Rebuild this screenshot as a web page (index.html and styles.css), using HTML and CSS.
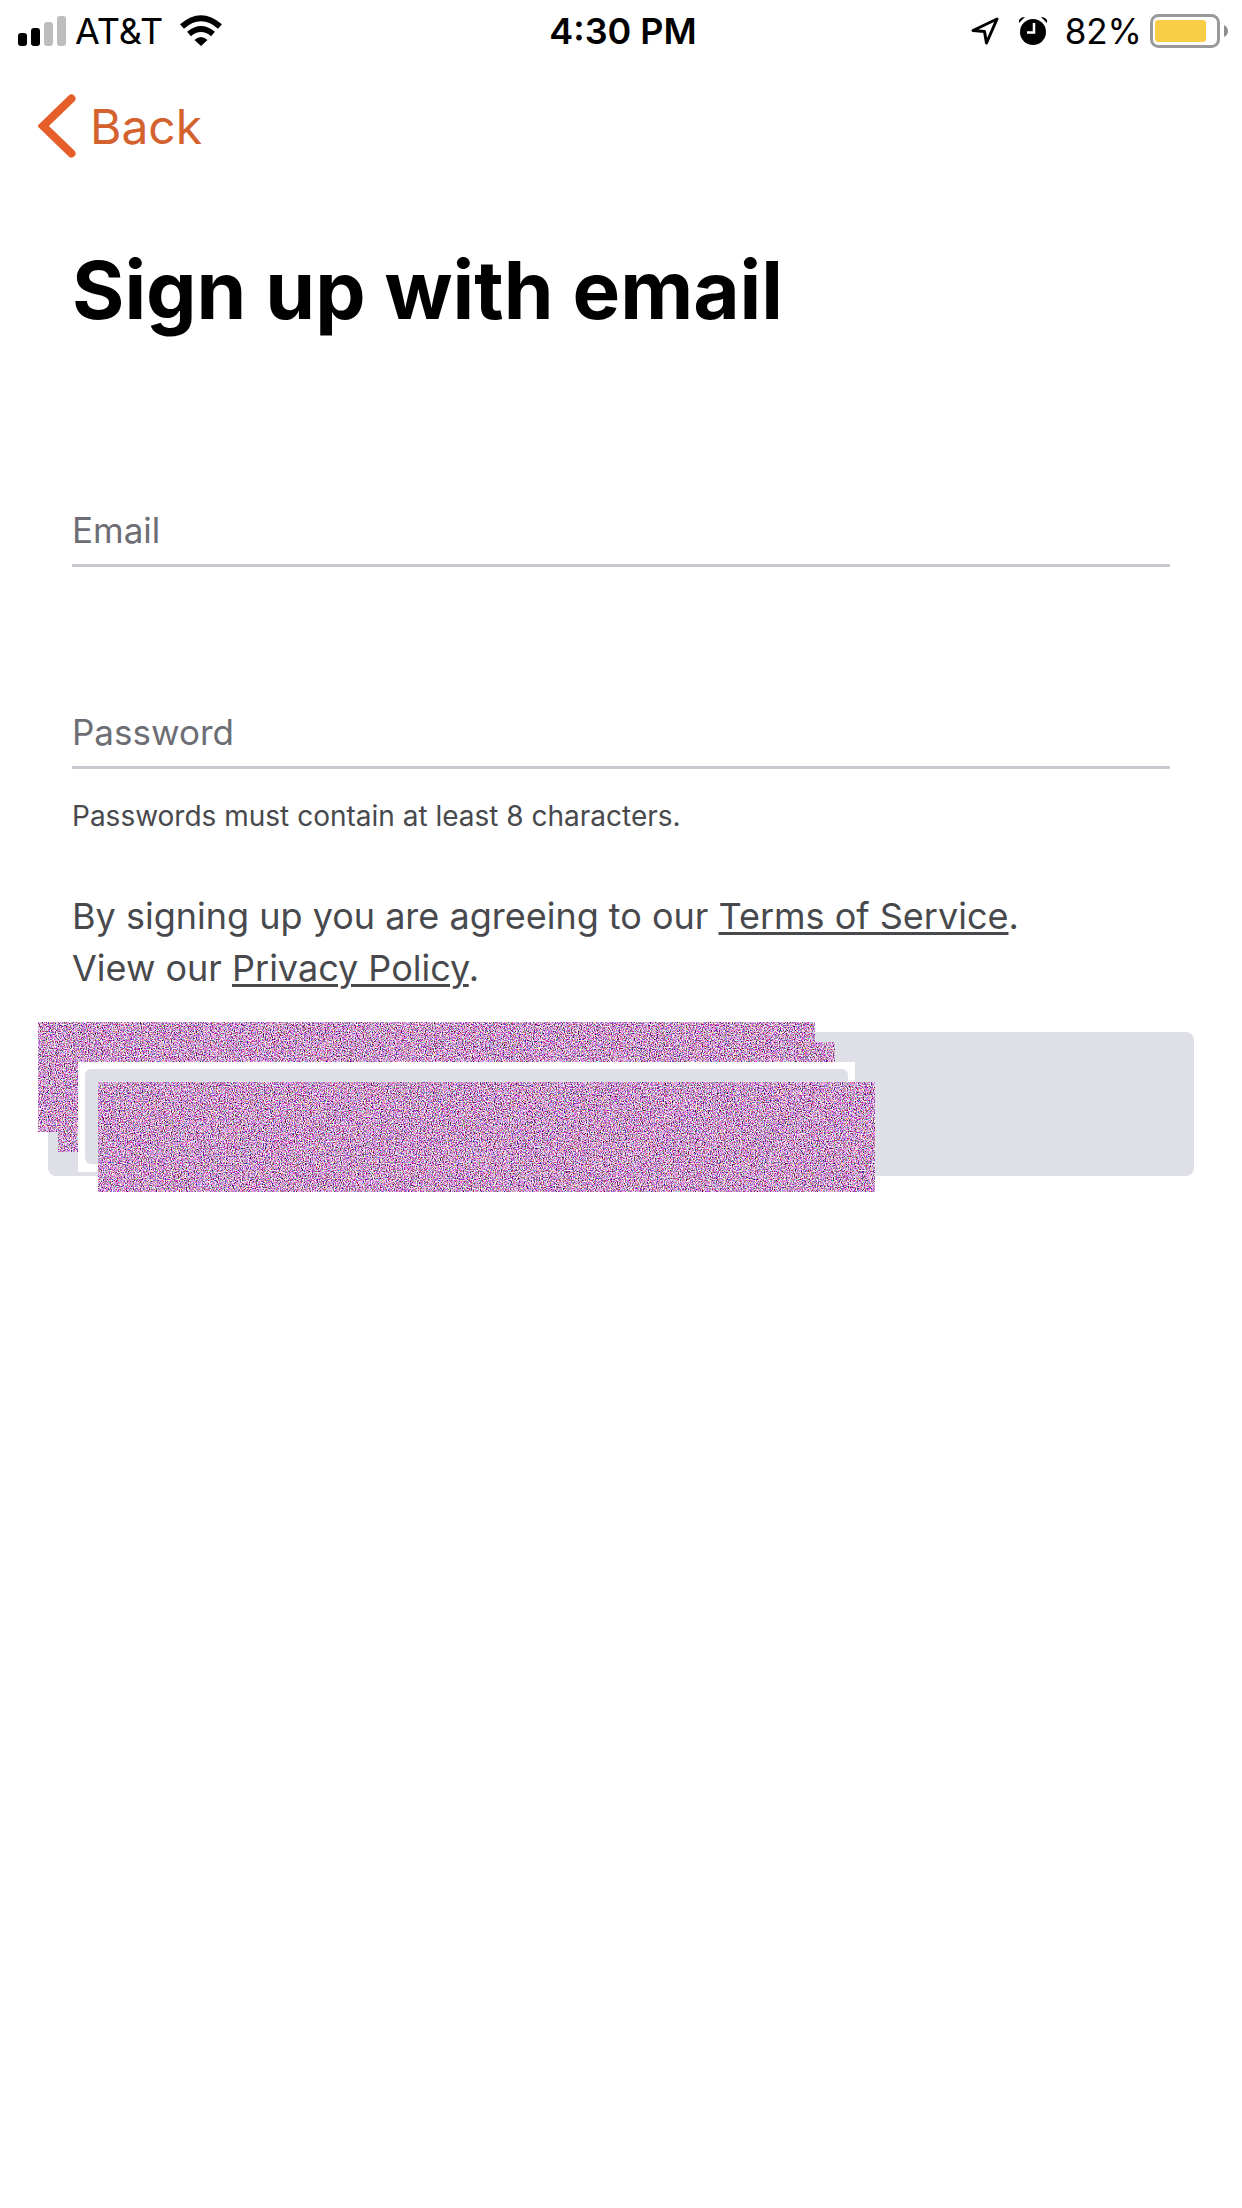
FILE: index.html
```html
<!DOCTYPE html>
<html lang="en">
<head>
<meta charset="utf-8">
<meta name="viewport" content="width=device-width, initial-scale=1">
<title>Sign up with email</title>
<link rel="stylesheet" href="styles.css">
</head>
<body>
<header class="status-bar">
  <div class="status-group">
    <svg class="icon-signal" viewBox="0 0 48 32" aria-hidden="true">
      <rect x="0" y="18" width="9" height="13" rx="3"/>
      <rect x="13" y="13" width="9" height="18" rx="3"/>
      <rect x="26" y="7" width="9" height="24" rx="3" fill="#bdbdbd"/>
      <rect x="39" y="1" width="9" height="30" rx="3" fill="#bdbdbd"/>
    </svg>
    <span class="carrier">AT&amp;T</span>
    <svg class="icon-wifi" viewBox="0 0 42 32" aria-hidden="true">
      <path d="M21 31 L14.500 25 Q21 19 27.500 25 Z"/>
      <g fill="none" stroke="#000" stroke-width="6">
        <path d="M2 11.500 Q21 -5 40 11.500"/>
        <path d="M9 19 Q21 9 33 19"/>
      </g>
    </svg>
  </div>
  <span class="clock">4:30 PM</span>
  <div class="status-group status-right">
    <svg class="icon-location" viewBox="0 0 28 28" aria-hidden="true">
      <path d="M2 13.500 L26 2 L15.500 26 L13.500 14.500 Z" fill="none" stroke="#000" stroke-width="3" stroke-linejoin="round"/>
    </svg>
    <svg class="icon-alarm" viewBox="0 0 28 28" aria-hidden="true">
      <circle cx="14" cy="15" r="13"/>
      <path d="M0 6 V3 Q2 0 6 0 Z M28 6 V3 Q26 0 22 0 Z"/>
      <path d="M15 6 V15.500 H8" fill="none" stroke="#fff" stroke-width="2.500"/>
    </svg>
    <span class="percent">82%</span>
    <svg class="icon-battery" viewBox="0 0 78 34" aria-hidden="true">
      <rect x="1.500" y="1.500" width="67" height="31" rx="7" fill="#fff" stroke="#999" stroke-width="3"/>
      <rect x="5" y="6" width="51" height="22" rx="3" fill="#f7ce46"/>
      <path d="M74 11 Q78 13 78 17 Q78 21 74 23 Z" fill="#8e8e8e"/>
    </svg>
  </div>
</header>

<nav class="nav-bar">
  <button type="button" class="back">
    <svg class="icon-back" viewBox="0 0 38 64" aria-hidden="true">
      <path d="M33.500 4.500 L5 32 L33.500 59.500" fill="none" stroke="#e65f2b" stroke-width="8" stroke-linecap="round" stroke-linejoin="miter"/>
    </svg>
    <span>Back</span>
  </button>
</nav>

<main>
  <form class="signup">
    <h1>Sign up with email</h1>
    <input class="field" type="email" placeholder="Email" aria-label="Email">
    <input class="field" type="password" placeholder="Password" aria-label="Password">
    <p class="hint">Passwords must contain at least 8 characters.</p>
    <p class="terms">By signing up you are agreeing to our <a href="#terms">Terms of Service</a>.<br>View our <a href="#privacy">Privacy Policy</a>.</p>
    <div class="submit-area">
      <button type="button" class="submit" aria-label="Sign up"></button>
      <svg class="cover" viewBox="0 0 837 170" aria-hidden="true">
        <filter id="grain" x="0" y="0" width="1" height="1" color-interpolation-filters="sRGB">
          <feTurbulence type="fractalNoise" baseFrequency="0.870" numOctaves="3" seed="7"/>
          <feColorMatrix values="1.500 0 0 1.500 -0.680  0 1.500 0 1.800 -1.050  0 0 1.500 1.500 -0.680  0 0 0 0 1"/>
        </filter>
        <rect width="777" height="110" filter="url(#grain)"/>
        <rect x="20" y="20" width="777" height="110" filter="url(#grain)"/>
        <rect x="40" y="40" width="777" height="110" fill="#fff"/>
        <rect x="47" y="47" width="763" height="95" rx="6" fill="#dedfe7"/>
        <rect x="60" y="60" width="777" height="110" filter="url(#grain)"/>
      </svg>
    </div>
  </form>
</main>
</body>
</html>
```
FILE: styles.css
```css
* {
  box-sizing: border-box;
}

body {
  margin: 0;
  min-height: 100vh;
  background: #fff;
  color: #000;
  font-family: Inter, "Liberation Sans", sans-serif;
}

svg {
  display: block;
}

.status-bar {
  display: grid;
  grid-template-columns: 1fr auto 1fr;
  align-items: center;
  height: 60px;
  padding: 2px 14px 0 18px;
  font-size: 36px;
}

.status-group {
  display: flex;
  align-items: center;
}

.status-right {
  justify-content: flex-end;
}

.icon-signal {
  width: 48px;
  height: 32px;
  margin-right: 9px;
}

.icon-wifi {
  width: 42px;
  height: 32px;
  margin-left: 17px;
}

.clock {
  font-weight: 600;
}

.percent {
  font-size: 35px;
}

.icon-location {
  width: 28px;
  height: 28px;
  margin-right: 20px;
}

.icon-alarm {
  width: 28px;
  height: 28px;
  margin-right: 18px;
}

.icon-battery {
  width: 78px;
  height: 34px;
  margin-left: 8px;
}

.nav-bar {
  display: flex;
  height: 132px;
  padding: 0 38px;
}

.back {
  display: flex;
  align-items: center;
  gap: 14px;
  height: 132px;
  padding: 0;
  border: 0;
  background: none;
  color: #d4622f;
  font: inherit;
  font-size: 48px;
}

.icon-back {
  width: 38px;
  height: 64px;
}

.signup {
  display: flex;
  flex-direction: column;
  padding: 0 72px;
}

h1 {
  margin: 48px 0 25px;
  font-size: 80px;
  line-height: 100px;
  font-weight: 700;
}

.field {
  width: 100%;
  height: 75px;
  margin-top: 127px;
  padding: 4px 0 0;
  border: 0;
  border-bottom: 3px solid #c9cacf;
  border-radius: 0;
  background: none;
  color: #48494d;
  font: inherit;
  font-size: 35px;
}

.field::placeholder {
  color: #6d6e74;
  opacity: 1;
}

.hint {
  margin: 27px 0 0;
  color: #48494d;
  font-size: 28px;
  line-height: 40px;
}

.terms {
  margin: 54px 0 0;
  color: #48494d;
  font-size: 36px;
  line-height: 52px;
}

.terms a {
  color: inherit;
  text-decoration-thickness: 3px;
  text-underline-offset: 3px;
}

.submit-area {
  position: relative;
  margin: 38px -24px 0;
}

.submit {
  display: block;
  width: 100%;
  height: 144px;
  border: 0;
  border-radius: 8px;
  background: #dedfe7;
}

.cover {
  position: absolute;
  top: -10px;
  left: -10px;
  width: 837px;
  height: 170px;
}
```
